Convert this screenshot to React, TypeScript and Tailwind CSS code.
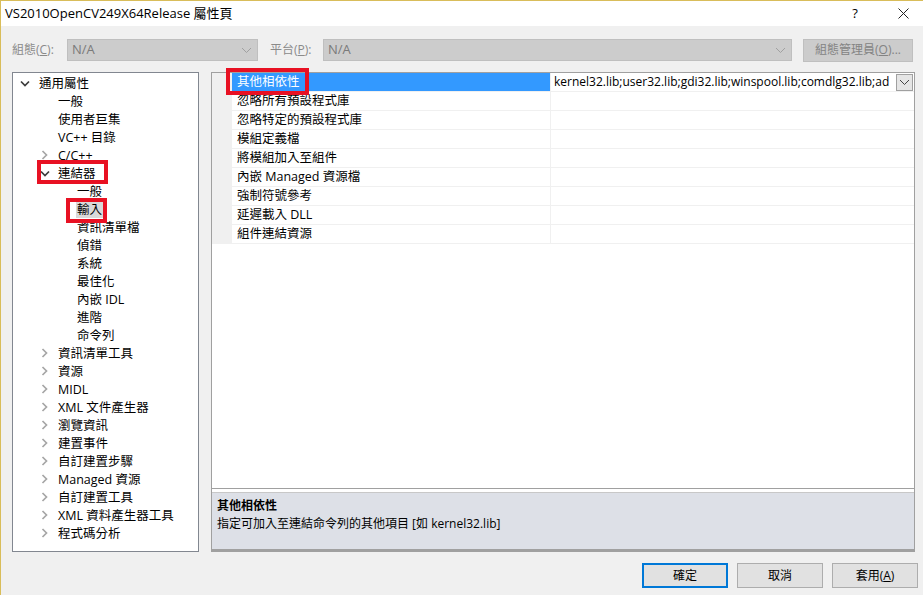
import React from "react";

type TreeItem = {
  label: string;
  level: number;
  chevron?: "open" | "closed";
  selected?: boolean;
};

const treeItems: TreeItem[] = [
  { label: "通用屬性", level: 0, chevron: "open" },
  { label: "一般", level: 1 },
  { label: "使用者巨集", level: 1 },
  { label: "VC++ 目錄", level: 1 },
  { label: "C/C++", level: 1, chevron: "closed" },
  { label: "連結器", level: 1, chevron: "open" },
  { label: "一般", level: 2 },
  { label: "輸入", level: 2, selected: true },
  { label: "資訊清單檔", level: 2 },
  { label: "偵錯", level: 2 },
  { label: "系統", level: 2 },
  { label: "最佳化", level: 2 },
  { label: "內嵌 IDL", level: 2 },
  { label: "進階", level: 2 },
  { label: "命令列", level: 2 },
  { label: "資訊清單工具", level: 1, chevron: "closed" },
  { label: "資源", level: 1, chevron: "closed" },
  { label: "MIDL", level: 1, chevron: "closed" },
  { label: "XML 文件產生器", level: 1, chevron: "closed" },
  { label: "瀏覽資訊", level: 1, chevron: "closed" },
  { label: "建置事件", level: 1, chevron: "closed" },
  { label: "自訂建置步驟", level: 1, chevron: "closed" },
  { label: "Managed 資源", level: 1, chevron: "closed" },
  { label: "自訂建置工具", level: 1, chevron: "closed" },
  { label: "XML 資料產生器工具", level: 1, chevron: "closed" },
  { label: "程式碼分析", level: 1, chevron: "closed" },
];

const properties = [
  "其他相依性",
  "忽略所有預設程式庫",
  "忽略特定的預設程式庫",
  "模組定義檔",
  "將模組加入至組件",
  "內嵌 Managed 資源檔",
  "強制符號參考",
  "延遲載入 DLL",
  "組件連結資源",
];

const font = { fontFamily: '"Segoe UI", "Open Sans", "Noto Sans CJK TC", sans-serif' };

const Chevron = ({ open }: { open: boolean }) =>
  open ? (
    <svg width="10" height="9" viewBox="0 0 10 9">
      <path d="M1 2.5 L5 6.5 L9 2.5" fill="none" stroke="#3c3c3c" strokeWidth="1.7" />
    </svg>
  ) : (
    <svg width="9" height="10" viewBox="0 0 9 10">
      <path d="M2.5 1 L6.5 5 L2.5 9" fill="none" stroke="#a6a6a6" strokeWidth="1.7" />
    </svg>
  );

const SmallDown = ({ color }: { color: string }) => (
  <svg width="11" height="7" viewBox="0 0 11 7">
    <path d="M1 1 L5.5 5.5 L10 1" fill="none" stroke={color} strokeWidth="1" />
  </svg>
);

const App: React.FC = () => {
  return (
    <div
      className="w-[923px] h-[595px] bg-[#f0f0f0] border-t border-l border-[#d9bd5a] flex flex-col text-[12px] text-black overflow-hidden"
      style={font}
    >
      {/* Title bar */}
      <div className="h-[25px] bg-white flex items-center pl-[4px]">
        <p className="text-[13px] leading-none">VS2010OpenCV249X64Release 屬性頁</p>
        <div className="ml-auto flex items-center">
          <span className="text-[13px] w-[46px] text-center mr-[5px]">?</span>
          <span className="w-[40px] flex justify-center">
            <svg width="11" height="11" viewBox="0 0 11 11">
              <path d="M0.5 0.5 L10.5 10.5 M10.5 0.5 L0.5 10.5" stroke="#222" strokeWidth="1" />
            </svg>
          </span>
        </div>
      </div>

      {/* Config row */}
      <div className="mt-[13px] h-[22px] flex items-center pl-[11px] pr-[10px] text-[#8a8a8a]">
        <span className="w-[55px]">組態(<u>C</u>):</span>
        <div className="w-[191px] h-[22px] bg-[#cccccc] border border-[#bfbfbf] flex items-center px-[4px] text-[#7a7a7a]">
          <span className="text-[13px]">N/A</span>
          <span className="ml-auto mr-[1px]">
            <SmallDown color="#a0a0a0" />
          </span>
        </div>
        <span className="ml-[12px] w-[53px]">平台(<u>P</u>):</span>
        <div className="w-[469px] h-[22px] bg-[#cccccc] border border-[#bfbfbf] flex items-center px-[4px] text-[#7a7a7a]">
          <span className="text-[13px]">N/A</span>
          <span className="ml-auto mr-[1px]">
            <SmallDown color="#a0a0a0" />
          </span>
        </div>
        <div className="ml-[11px] w-[110px] h-[23px] bg-[#cccccc] border border-[#bfbfbf] flex items-center justify-center text-[#838383]">
          組態管理員(<u>O</u>)...
        </div>
      </div>

      {/* Main area */}
      <div className="mt-[11px] flex pl-[11px]">
        {/* Tree */}
        <div className="relative w-[187px] h-[480px] bg-white border border-[#828790] pt-[1px]">
          {treeItems.map((item, i) => (
            <div key={i} className="h-[18px] flex items-center">
              <div
                className={
                  item.level === 0
                    ? "pl-[7px] w-[26px] flex"
                    : item.level === 1
                    ? "pl-[27px] w-[45px] flex"
                    : "pl-[26px] w-[64px] flex"
                }
              >
                {item.chevron && item.level < 2 && <Chevron open={item.chevron === "open"} />}
              </div>
              <span
                className={
                  item.selected
                    ? "bg-[#d9d9d9] px-[1px] -ml-[1px] leading-[17px] text-[12.5px]"
                    : "leading-[17px] whitespace-nowrap text-[12.5px]"
                }
              >
                {item.label}
              </span>
            </div>
          ))}
          {/* highlight boxes */}
          <div className="absolute left-[24px] top-[87px] w-[71px] h-[24px] border-[4px] border-[#e81123]" />
          <div className="absolute left-[53px] top-[125px] w-[41px] h-[25px] border-[4px] border-[#e81123]" />
        </div>

        {/* Property panel */}
        <div className="relative ml-[12px] w-[704px] h-[480px] border border-[#a0a0a0] bg-white flex flex-col">
          <div className="flex-1 flex flex-col">
            {properties.map((p, i) => (
              <div key={i} className="h-[19px] flex">
                <div className="w-[20px] bg-[#f0f0f0]" />
                <div className="flex-1 flex border-b border-[#f0f0f0]">
                  <div
                    className={
                      i === 0
                        ? "w-[318px] bg-[#3399ff] text-white flex items-center pl-[5px] text-[12.5px]"
                        : "w-[318px] flex items-center pl-[5px] text-[12.5px]"
                    }
                  >
                    {p}
                  </div>
                  <div className="w-[1px] bg-[#f0f0f0]" />
                  <div className="flex-1 flex items-center pl-[3px] overflow-hidden">
                    {i === 0 && (
                      <>
                        <span className="whitespace-nowrap overflow-hidden w-[342px]">
                          kernel32.lib;user32.lib;gdi32.lib;winspool.lib;comdlg32.lib;ad
                        </span>
                        <span className="ml-auto mr-[1px] w-[17px] h-[17px] bg-[#e5e5e5] border border-[#a0a0a0] flex items-center justify-center">
                          <SmallDown color="#444" />
                        </span>
                      </>
                    )}
                  </div>
                </div>
              </div>
            ))}
            <div className="flex-1" />
          </div>
          {/* description */}
          <div className="h-[63px] border-t border-[#a0a0a0] pt-[3px]">
            <div className="h-full bg-[#dde0e7] border-t border-[#c8c8c8] border-b-2 border-b-[#a0a0a0] px-[5px] pt-[4px]">
              <p className="font-bold leading-[18px]">其他相依性</p>
              <p className="leading-[18px]">指定可加入至連結命令列的其他項目 [如 kernel32.lib]</p>
            </div>
          </div>
          <div className="absolute left-[14px] top-[-5px] w-[83px] h-[27px] border-[4px] border-[#e81123]" />
        </div>
      </div>

      {/* Buttons */}
      <div className="mt-[11px] flex justify-end pr-[5px] gap-[9px]">
        <button className="w-[86px] h-[25px] bg-[#e1e1e1] border-2 border-[#0078d7]">確定</button>
        <button className="w-[86px] h-[25px] bg-[#e1e1e1] border border-[#adadad]">取消</button>
        <button className="w-[86px] h-[25px] bg-[#e1e1e1] border border-[#adadad]">
          套用(<u>A</u>)
        </button>
      </div>
    </div>
  );
};

export default App;
